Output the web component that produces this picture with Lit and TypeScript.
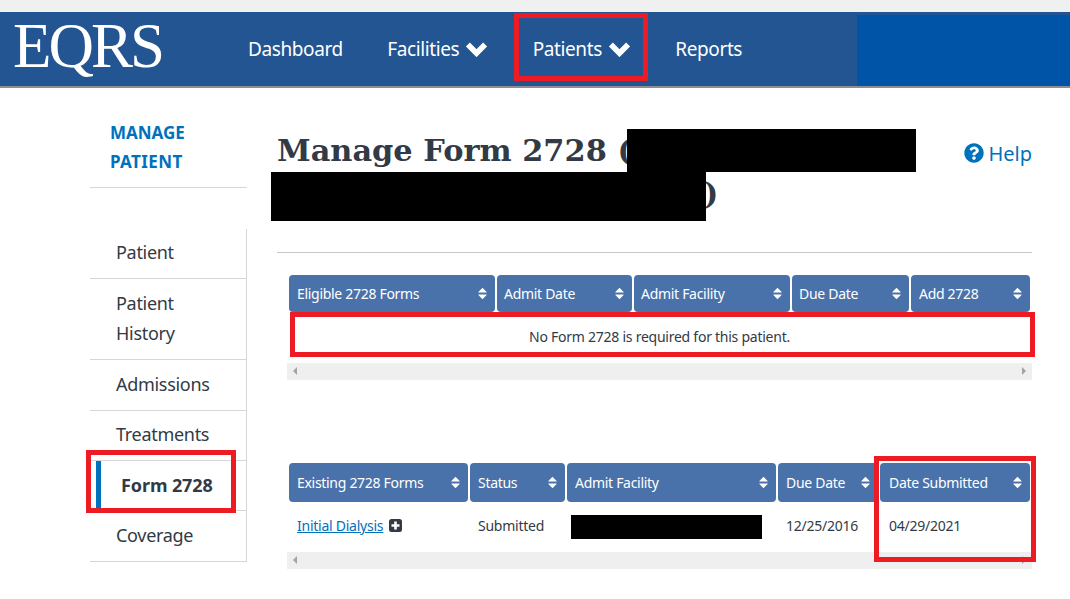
import { LitElement, html, css } from "lit";
import { customElement } from "lit/decorators.js";

const chevron = html`<svg class="chev" viewBox="0 0 23 16"><polyline points="2.9,3.6 11.5,12.2 20.1,3.6" fill="none" stroke="#fff" stroke-width="5.6" stroke-linejoin="miter"/></svg>`;
const sort = html`<svg class="sort" viewBox="0 0 10 14"><path fill="#fff" d="M5 0.5 L9.6 5.2 Q10 6 9.2 6 L0.8 6 Q0 6 0.4 5.2 Z M0.8 8 L9.2 8 Q10 8 9.6 8.8 L5 13.5 L0.4 8.8 Q0 8 0.8 8 Z"/></svg>`;

const head = (labels: string[]) =>
  labels.map((l) => html`<div class="th"><span>${l}</span>${sort}</div>`);

const scrollbar = html`<div class="scroll"><i class="arr l"></i><i class="arr r"></i></div>`;

@customElement("app-root")
export class AppRoot extends LitElement {
  static styles = css`
    :host { display: block; width: 1070px; height: 599px; overflow: hidden; position: relative; background: #fff;
      font-family: "Noto Sans", sans-serif; color: #323a45; }
    .strip { height: 12px; background: #f0f0f0; }
    header { height: 74px; border-bottom: 2px solid #8e8e8e; background: #225591; display: flex; align-items: stretch; }
    .logo { font-family: "Liberation Serif", serif; font-size: 63px; color: #fff; width: 248px; padding-left: 13px; box-sizing: border-box;
      line-height: 68px; letter-spacing: -3px; }
    nav { display: flex; flex: 1; gap: 44.5px; align-items: center; height: 74px; font-size: 19px; letter-spacing: -0.4px; color: #fff; }
    nav span { display: flex; align-items: center; gap: 6px; }
    .chev { width: 23px; height: 16px; }
    .panel { width: 213px; margin-top: 3px; background: #0054a8; }
    .page { display: flex; padding-left: 90px; }
    aside { width: 157px; padding-top: 30px; }
    .manage { font-size: 17px; font-weight: 700; line-height: 29px; color: #0071bc; padding: 0 0 11px 20px; border-bottom: 1px solid #d6d7d9; }
    .wide { letter-spacing: 0.4px; }
    .menu { margin-top: 41px; border-right: 1px solid #d6d7d9; font-size: 18px; line-height: 30.4px; letter-spacing: -0.3px; }
    .menu div { padding: 8.4px 0 10.6px 26px; border-bottom: 1px solid #d6d7d9; }
    .menu .active { font-weight: 700; margin-left: 6px; border-left: 5px solid #0071bc; padding: 9.4px 0 9.6px 20px; letter-spacing: -0.1px; }
    main { margin-left: 30px; width: 755px; padding-top: 41px; }
    .top { display: flex; justify-content: space-between; height: 123px; border-bottom: 1px solid #c8c8c8; }
    h1 { margin: 0; width: 640px; font-family: "DejaVu Serif", serif; font-size: 30.4px; line-height: 43px; font-weight: 700; color: #323a45; }
    .spacer { display: inline-block; width: 427px; height: 1px; }
    .help { display: flex; align-items: center; gap: 4px; height: 30px; margin-top: 9px; color: #0071bc; font-size: 20px; }
    .help svg { width: 20px; height: 20px; }
    .tbl { margin: 22px 0 0 12px; width: 741px; }
    .row { display: grid; gap: 2px; }
    .th { background: #4a72aa; color: #fff; border-radius: 4px; font-size: 14px; letter-spacing: -0.3px; display: flex; align-items: center; justify-content: space-between;
      padding: 0 8px; box-sizing: border-box; }
    .sort { width: 9px; height: 13px; flex: none; }
    .t1 .row { grid-template-columns: 206px 135px 156px 117px 119px; height: 37px; }
    .t1 .th:nth-child(n + 2):nth-child(-n + 4) { padding-left: 7px; }
    .t2 { margin-top: 83px; }
    .t2 .row.h { grid-template-columns: 179px 95px 209px 100px 150px; height: 39px; }
    .t2 .row.h .th:nth-child(5) { padding-left: 9px; }
    .t2 .row.b { grid-template-columns: 179px 95px 209px 100px 150px; height: 46px; padding-bottom: 4px; align-items: center; font-size: 14px; letter-spacing: -0.25px; }
    .t2 .row.b > div { padding-left: 8px; }
    .t2 .row.b > div:nth-child(5) { padding-left: 9px; }
    .msg { height: 49px; padding-bottom: 2px; font-size: 14px; letter-spacing: -0.25px; display: flex; align-items: center; justify-content: center; }
    a { color: #0071bc; text-decoration: underline; }
    .cellicon { display: inline-block; vertical-align: -1px; width: 13px; height: 13px; margin-left: 6px; }
    .black { display: block; background: #000; height: 24px; width: 191px; margin: 4px 0 0 -4px; }
    .scroll { margin-left: -2px; width: 745px; height: 17px; background: #efefef; position: relative; }
    .arr { position: absolute; top: 4px; width: 0; height: 0; border-top: 4px solid transparent; border-bottom: 4px solid transparent; }
    .arr.l { left: 6px; border-right: 4px solid #a3a3a3; }
    .arr.r { right: 6px; border-left: 4px solid #a3a3a3; }
    .red { position: absolute; border: 5px solid #ed1c24; box-sizing: border-box; }
    .redact { position: absolute; background: #000; }
  `;

  render() {
    return html`
      <div class="strip"></div>
      <header>
        <div class="logo">EQRS</div>
        <nav>
          <span>Dashboard</span>
          <span>Facilities ${chevron}</span>
          <span>Patients ${chevron}</span>
          <span>Reports</span>
        </nav>
        <div class="panel"></div>
      </header>
      <div class="page">
        <aside>
          <div class="manage">MANAGE<br /><span class="wide">PATIENT</span></div>
          <div class="menu">
            <div>Patient</div>
            <div>Patient<br />History</div>
            <div>Admissions</div>
            <div>Treatments</div>
            <div class="active">Form 2728</div>
            <div>Coverage</div>
          </div>
        </aside>
        <main>
          <div class="top">
            <h1>Manage Form 2728 (<br /><span class="spacer"></span>)</h1>
            <div class="help">
              <svg viewBox="0 0 512 512"><path fill="#0071bc" d="M504 256c0 136.997-111.043 248-248 248S8 392.997 8 256C8 119.083 119.043 8 256 8s248 111.083 248 248zM262.655 90c-54.497 0-89.255 22.957-116.549 63.758-3.536 5.286-2.353 12.415 2.715 16.258l34.699 26.31c5.205 3.947 12.621 3.008 16.665-2.122 17.864-22.658 30.113-35.797 57.303-35.797 20.429 0 45.698 13.148 45.698 32.958 0 14.976-12.363 22.667-32.534 33.976C247.128 238.528 216 254.941 216 296v4c0 6.627 5.373 12 12 12h56c6.627 0 12-5.373 12-12v-1.333c0-28.462 83.186-29.647 83.186-106.667 0-58.002-60.165-102-116.531-102zM256 338c-25.365 0-46 20.635-46 46 0 25.364 20.635 46 46 46s46-20.636 46-46c0-25.365-20.635-46-46-46z"/></svg>
              <span>Help</span>
            </div>
          </div>
          <div class="tbl t1">
            <div class="row">${head(["Eligible 2728 Forms", "Admit Date", "Admit Facility", "Due Date", "Add 2728"])}</div>
            <div class="msg">No Form 2728 is required for this patient.</div>
            ${scrollbar}
          </div>
          <div class="tbl t2">
            <div class="row h">${head(["Existing 2728 Forms", "Status", "Admit Facility", "Due Date", "Date Submitted"])}</div>
            <div class="row b">
              <div><a>Initial Dialysis</a><svg class="cellicon" viewBox="0 0 13 13"><rect width="13" height="13" rx="2.5" fill="#323a45"/><path d="M5.2 2.5h2.6v2.7h2.7v2.6H7.8v2.7H5.2V7.8H2.5V5.2h2.7z" fill="#fff"/></svg></div>
              <div>Submitted</div>
              <div><span class="black"></span></div>
              <div>12/25/2016</div>
              <div>04/29/2021</div>
            </div>
            ${scrollbar}
          </div>
        </main>
      </div>
      <div class="redact" style="left:627px;top:129px;width:289px;height:43px"></div>
      <div class="redact" style="left:271px;top:172px;width:435px;height:49px"></div>
      <div class="red" style="left:514px;top:13px;width:134px;height:68px"></div>
      <div class="red" style="left:86px;top:450px;width:150px;height:63px"></div>
      <div class="red" style="left:290px;top:312px;width:745px;height:45px"></div>
      <div class="red" style="left:874px;top:456px;width:162px;height:106px"></div>
    `;
  }
}
